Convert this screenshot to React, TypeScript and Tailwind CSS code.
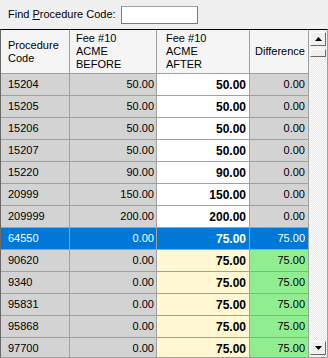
import React from "react";

type Row = {
  code: string;
  before: string;
  after: string;
  diff: string;
  kind: "same" | "selected" | "changed";
};

const ROWS: Row[] = [
  { code: "15204", before: "50.00", after: "50.00", diff: "0.00", kind: "same" },
  { code: "15205", before: "50.00", after: "50.00", diff: "0.00", kind: "same" },
  { code: "15206", before: "50.00", after: "50.00", diff: "0.00", kind: "same" },
  { code: "15207", before: "50.00", after: "50.00", diff: "0.00", kind: "same" },
  { code: "15220", before: "90.00", after: "90.00", diff: "0.00", kind: "same" },
  { code: "20999", before: "150.00", after: "150.00", diff: "0.00", kind: "same" },
  { code: "209999", before: "200.00", after: "200.00", diff: "0.00", kind: "same" },
  { code: "64550", before: "0.00", after: "75.00", diff: "75.00", kind: "selected" },
  { code: "90620", before: "0.00", after: "75.00", diff: "75.00", kind: "changed" },
  { code: "9340", before: "0.00", after: "75.00", diff: "75.00", kind: "changed" },
  { code: "95831", before: "0.00", after: "75.00", diff: "75.00", kind: "changed" },
  { code: "95868", before: "0.00", after: "75.00", diff: "75.00", kind: "changed" },
  { code: "97700", before: "0.00", after: "75.00", diff: "75.00", kind: "changed" },
];

const cell = "h-[22px] border-r border-b border-[#a0a0a0] flex items-center text-[11px] leading-none";

function ArrowButton({ up }: { up?: boolean }) {
  return (
    <div className="w-[16px] h-[14px] bg-[#f0f0f0] border-t border-l border-t-white border-l-white border-r border-b border-r-[#696969] border-b-[#696969] flex items-center justify-center">
      <svg width="7" height="4" viewBox="0 0 7 4">
        {up ? <polygon points="3.5,0 7,4 0,4" fill="#000" /> : <polygon points="0,0 7,0 3.5,4" fill="#000" />}
      </svg>
    </div>
  );
}

export default function App() {
  return (
    <div className="w-[328px] h-[358px] bg-[#f0f0f0] overflow-hidden text-black font-['Liberation_Sans',Arial,sans-serif]">
      {/* Search bar */}
      <div className="h-[29px] flex items-center pl-[8px]">
        <span className="text-[11px]">
          Find <span className="underline">P</span>rocedure Code:
        </span>
        <div className="ml-[5px] w-[77px] h-[18px] bg-white border border-[#7a7a7a] border-t-[#a0a0a0]" />
      </div>

      {/* Grid */}
      <div className="h-[329px] border border-t-black border-l-[#696969] border-r-[#a0a0a0] border-b-[#a0a0a0] flex overflow-hidden">
        <div className="w-[308px] shrink-0">
          <div className="grid grid-cols-[69px_87px_93px_59px]">
            {/* Header */}
            <div className="h-[44px] bg-[#f5f5f5] border-r border-b border-[#a0a0a0] flex items-center pl-[7px] text-[11px] leading-[13px]">
              <div>
                Procedure
                <br />
                Code
              </div>
            </div>
            <div className="h-[44px] bg-[#f5f5f5] border-r border-b border-[#a0a0a0] flex items-center pl-[6px] text-[11px] leading-[13px]">
              <div>
                Fee #10
                <br />
                ACME
                <br />
                BEFORE
              </div>
            </div>
            <div className="h-[44px] bg-[#f5f5f5] border-r border-b border-[#a0a0a0] flex items-center pl-[9px] text-[11px] leading-[13px]">
              <div>
                Fee #10
                <br />
                ACME
                <br />
                AFTER
              </div>
            </div>
            <div className="h-[44px] bg-[#f5f5f5] border-r border-b border-[#a0a0a0] flex items-center pl-[5px] text-[11px] leading-[13px]">
              Difference
            </div>

            {ROWS.map((r) => {
              const sel = r.kind === "selected";
              const base = sel ? "bg-[#0078d7] text-white" : "bg-[#d3d3d3]";
              const after = sel ? "bg-[#0078d7] text-white" : r.kind === "changed" ? "bg-[#fff8d2]" : "bg-white";
              const diff = sel ? "bg-[#0078d7] text-white" : r.kind === "changed" ? "bg-[#90ee90]" : "bg-[#d3d3d3]";
              return (
                <React.Fragment key={r.code}>
                  <div className={`${cell} ${base} pl-[7px]`}>{r.code}</div>
                  <div className={`${cell} ${base} justify-end pr-[2px]`}>{r.before}</div>
                  <div className={`${cell} ${after} justify-end pr-[3px] font-bold text-[12px]`}>{r.after}</div>
                  <div className={`${cell} ${diff} justify-end pr-[3px]`}>{r.diff}</div>
                </React.Fragment>
              );
            })}
          </div>
        </div>

        {/* Scrollbar */}
        <div className="flex-1 flex flex-col items-center justify-between py-[2px] bg-[repeating-conic-gradient(#ffffff_0%_25%,#e6e6e6_0%_50%)] bg-[length:2px_2px]">
          <div className="flex flex-col">
            <ArrowButton up />
            <div className="mt-[3px] w-[16px] h-[8px] bg-[#f0f0f0] border-t border-l border-t-white border-l-white border-r border-b border-r-[#696969] border-b-[#696969]" />
          </div>
          <ArrowButton />
        </div>
      </div>
    </div>
  );
}
